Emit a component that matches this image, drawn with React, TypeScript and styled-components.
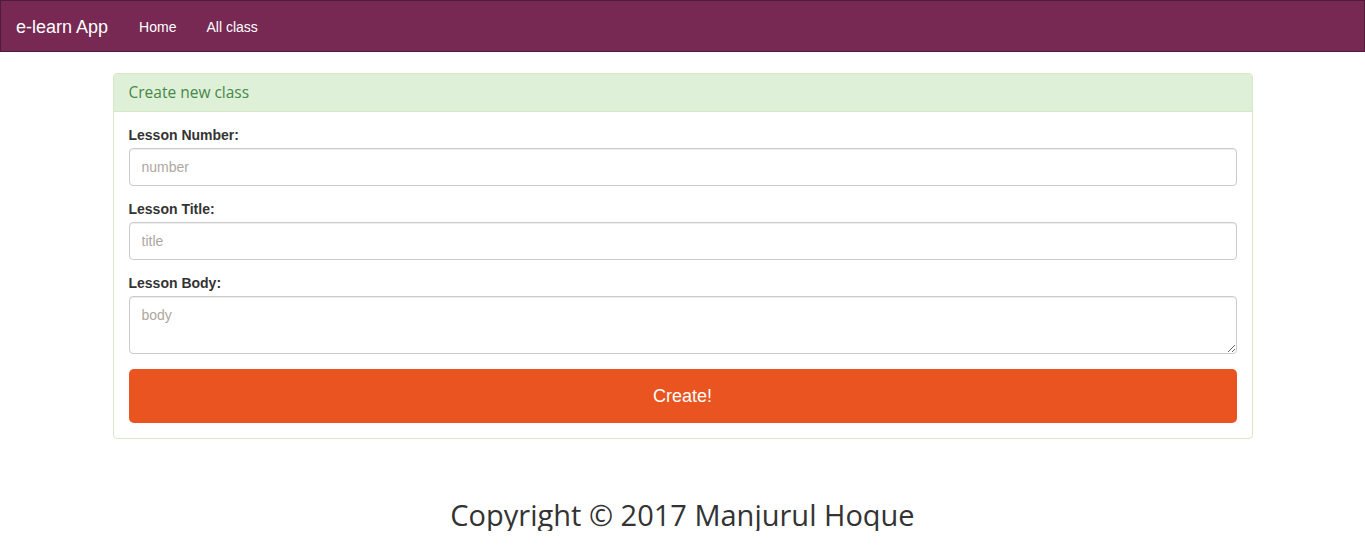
import React from "react";
import styled, { createGlobalStyle } from "styled-components";

const GlobalStyle = createGlobalStyle`
  html, body { margin: 0; padding: 0; background: #fff; }
  body {
    font-family: "Liberation Sans", Arial, Helvetica, sans-serif;
    font-size: 14px;
    line-height: 1.42857;
    color: #333;
  }
  * { box-sizing: border-box; }
`;

const Navbar = styled.nav`
  height: 52px;
  background: #772953;
  border: 1px solid #511c39;
  display: flex;
  align-items: center;
  padding-top: 2px;
  margin-bottom: 21px;
`;

const Brand = styled.a`
  font-size: 18px;
  color: #fff;
  padding: 0 16px 0 15px;
  line-height: 48px;
  text-decoration: none;
`;

const NavLink = styled.a`
  font-size: 14px;
  color: #fff;
  padding: 0 15px;
  line-height: 48px;
  text-decoration: none;
`;

const Container = styled.div`
  width: 1140px;
  margin: 0 auto;
`;

const Panel = styled.section`
  border: 1px solid #d6e9c6;
  border-radius: 4px;
  background: #fff;
`;

const PanelHeading = styled.div`
  background: #dff0d8;
  border-bottom: 1px solid #d6e9c6;
  border-radius: 3px 3px 0 0;
  color: #468847;
  font-family: "Open Sans", "Noto Sans", sans-serif;
  font-size: 15.5px;
  height: 38px;
  padding: 0 15px;
  display: flex;
  align-items: center;
`;

const PanelBody = styled.form`
  padding: 15px;
  display: flex;
  flex-direction: column;
`;

const FormGroup = styled.div`
  display: flex;
  flex-direction: column;
  margin-bottom: 15px;
`;

const Label = styled.label`
  font-weight: bold;
  font-size: 14px;
  line-height: 16px;
  margin-bottom: 5px;
  color: #333;
`;

const Input = styled.input`
  height: 38px;
  padding: 8px 12px;
  font-family: "Liberation Sans", Arial, sans-serif;
  font-size: 14px;
  border: 1px solid #ccc;
  border-radius: 4px;
  box-shadow: inset 0 1px 1px rgba(0,0,0,0.075);
  color: #333;
  &::placeholder { color: #aea79f; }
`;

const TextArea = styled.textarea`
  height: 58px;
  padding: 8px 12px;
  font-family: "Liberation Sans", Arial, sans-serif;
  font-size: 14px;
  line-height: 20px;
  border: 1px solid #ccc;
  border-radius: 4px;
  box-shadow: inset 0 1px 1px rgba(0,0,0,0.075);
  color: #333;
  &::placeholder { color: #aea79f; }
`;

const Button = styled.button`
  height: 54px;
  background: #e95420;
  border: none;
  border-radius: 5px;
  color: #fff;
  font-family: "Liberation Sans", Arial, sans-serif;
  font-size: 18px;
`;

const Footer = styled.footer`
  text-align: center;
  margin-top: 59px;
  font-family: "Open Sans", "Noto Sans", sans-serif;
  font-size: 29px;
  line-height: 33px;
  color: #333;
`;

export default function App() {
  return (
    <>
      <GlobalStyle />
      <Navbar>
        <Brand href="#">e-learn App</Brand>
        <NavLink href="#">Home</NavLink>
        <NavLink href="#">All class</NavLink>
      </Navbar>
      <Container>
        <Panel>
          <PanelHeading>Create new class</PanelHeading>
          <PanelBody onSubmit={(e) => e.preventDefault()}>
            <FormGroup>
              <Label>Lesson Number:</Label>
              <Input placeholder="number" />
            </FormGroup>
            <FormGroup>
              <Label>Lesson Title:</Label>
              <Input placeholder="title" />
            </FormGroup>
            <FormGroup>
              <Label>Lesson Body:</Label>
              <TextArea placeholder="body" />
            </FormGroup>
            <Button type="submit">Create!</Button>
          </PanelBody>
        </Panel>
        <Footer>Copyright © 2017 Manjurul Hoque</Footer>
      </Container>
    </>
  );
}
